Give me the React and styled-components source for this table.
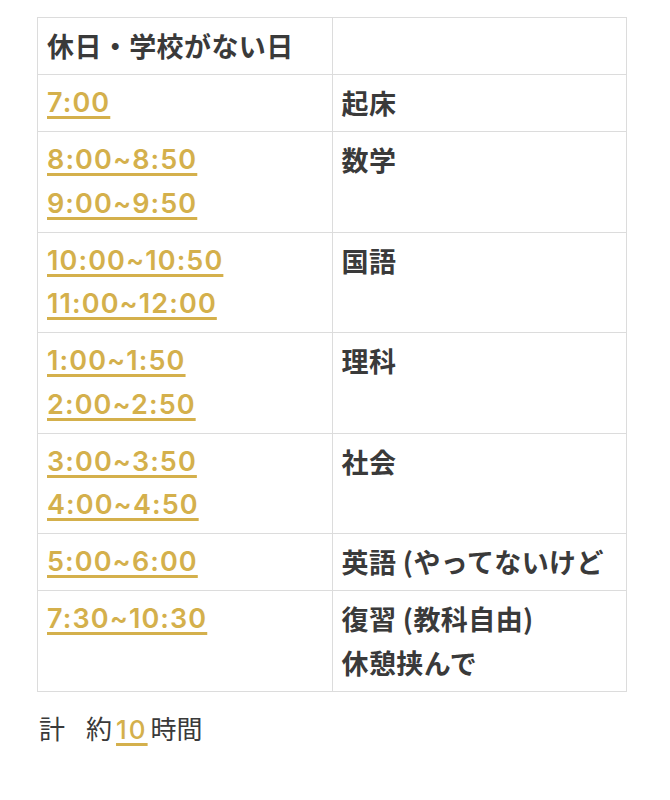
import styled, { createGlobalStyle } from "styled-components";

const Global = createGlobalStyle`
  body {
    margin: 0;
    background: #fff;
    font-family: "Noto Sans CJK JP", "Noto Sans", sans-serif;
    color: #3a3a3a;
  }
`;

const Page = styled.div`
  padding: 17px 43px 40px 37px;
`;

const Table = styled.table`
  width: 590px;
  border-collapse: collapse;
  table-layout: fixed;
`;

const Cell = styled.td`
  border: 1px solid #dcdcdc;
  padding: 6px 9px 6.5px;
  vertical-align: top;
  font-size: 27px;
  font-weight: 700;
  line-height: 43.5px;
  width: 50%;
  letter-spacing: 0.4px;
`;

const Time = styled.span`
  display: block;
  font-family: Inter, "Noto Sans", sans-serif;
  font-weight: 600;
  letter-spacing: 1.1px;
  color: #d4b04c;
  text-decoration: underline;
  text-decoration-thickness: 3px;
  text-underline-offset: 4px;
  text-decoration-color: #d4b04c;
`;

const Line = styled.span`
  display: block;
`;

const Footer = styled.p`
  margin: 15px 0 0 2px;
  font-size: 26px;
  line-height: 42px;
  font-weight: 400;
`;

const Spacer = styled.span`
  display: inline-block;
  width: 21px;
`;

const Gold = styled.span`
  margin: 0 3px 0 4px;
  font-family: Inter, "Noto Sans", sans-serif;
  font-weight: 500;
  letter-spacing: 2px;
  color: #d4b04c;
  text-decoration: underline;
  text-decoration-thickness: 3px;
  text-underline-offset: 4px;
`;

const rows = [
  { times: ["7:00"], subject: ["起床"] },
  { times: ["8:00~8:50", "9:00~9:50"], subject: ["数学"] },
  { times: ["10:00~10:50", "11:00~12:00"], subject: ["国語"] },
  { times: ["1:00~1:50", "2:00~2:50"], subject: ["理科"] },
  { times: ["3:00~3:50", "4:00~4:50"], subject: ["社会"] },
  { times: ["5:00~6:00"], subject: ["英語 (やってないけど"] },
  { times: ["7:30~10:30"], subject: ["復習 (教科自由)", "休憩挟んで"] },
];

export default function App() {
  return (
    <Page>
      <Global />
      <Table>
        <tbody>
          <tr>
            <Cell>休日・学校がない日</Cell>
            <Cell />
          </tr>
          {rows.map((r, i) => (
            <tr key={i}>
              <Cell>
                {r.times.map((t) => (
                  <Time key={t}>{t}</Time>
                ))}
              </Cell>
              <Cell>
                {r.subject.map((s) => (
                  <Line key={s}>{s}</Line>
                ))}
              </Cell>
            </tr>
          ))}
        </tbody>
      </Table>
      <Footer>
        計<Spacer />約<Gold>10</Gold>時間
      </Footer>
    </Page>
  );
}
